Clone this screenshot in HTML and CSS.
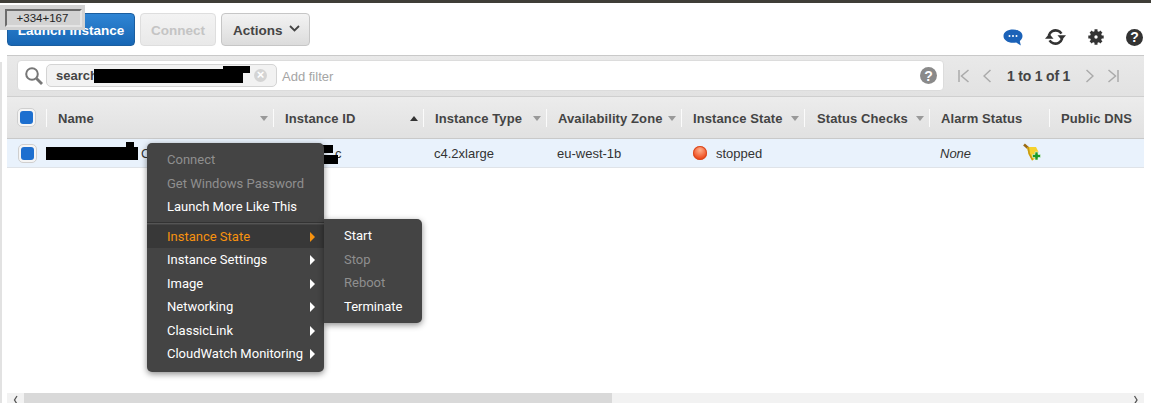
FILE: index.html
```html
<!DOCTYPE html>
<html lang="en">
<head>
<meta charset="utf-8">
<title>Instances</title>
<link rel="stylesheet" href="styles.css">
</head>
<body>
<div class="topline"></div>
<header class="toolbar">
  <div class="actions">
    <button class="btn primary">Launch Instance</button>
    <button class="btn disabled">Connect</button>
    <button class="btn">Actions
      <svg class="caret" width="11" height="7" viewBox="0 0 11 7"><path d="M1 1l4.500 4.500L10 1" fill="none" stroke="#444" stroke-width="1.800"/></svg>
    </button>
  </div>
  <div class="tools">
    <svg width="20" height="20" viewBox="0 0 20 20"><path d="M10 2.500c5.400 0 9.500 2.700 9.500 6.500 0 2-1.100 3.700-2.700 4.900l1 4.600-4.600-3c-1 .2-2.100.3-3.200.3-5.400 0-9.500-2.900-9.500-6.800s4.100-6.500 9.500-6.500z" fill="#1b62b8"/><circle cx="6.500" cy="9" r="1" fill="#fff"/><circle cx="10" cy="9" r="1" fill="#fff"/><circle cx="13.500" cy="9" r="1" fill="#fff"/></svg>
    <svg width="21" height="20" viewBox="0 0 21 20"><path d="M3.800 8.500C5 4.500 9 2.500 12.800 3.700c1.600.5 2.800 1.500 3.600 2.900" fill="none" stroke="#333" stroke-width="2.600"/><path d="M12.500 8.200h8.500l-4.300 5z" fill="#333"/><path d="M17.200 11.500c-1.200 4-5.200 6-9 4.800-1.600-.5-2.800-1.500-3.600-2.900" fill="none" stroke="#333" stroke-width="2.600"/><path d="M8.500 11.800H0l4.300-5z" fill="#333"/></svg>
    <svg width="16" height="20" viewBox="0 0 16 20"><circle cx="8" cy="10" r="4.300" fill="none" stroke="#333" stroke-width="3.400"/><path d="M8 2.300v15.400M.3 10h15.400M2.600 4.600l10.800 10.800M13.400 4.600L2.600 15.400" stroke="#333" stroke-width="3"/><circle cx="8" cy="10" r="1.700" fill="#fff"/></svg>
    <span class="help dark">?</span>
  </div>
</header>

<main class="panel">
  <div class="filterbar">
    <div class="searchbox">
      <svg width="20" height="20" viewBox="0 0 20 20"><circle cx="8" cy="8" r="5.800" fill="none" stroke="#777" stroke-width="2"/><path d="M12.500 12.500l5.500 5.500" stroke="#777" stroke-width="2.800"/></svg>
      <span class="token"><span class="token-text">search</span><span class="token-x">×</span></span>
      <span class="addfilter">Add filter</span>
      <span class="help grey">?</span>
    </div>
    <nav class="pager">
      <svg width="11" height="14" viewBox="0 0 11 14"><path d="M1 1v12M10.500 1L3.500 7l7 6" fill="none" stroke="#aaa" stroke-width="1.500"/></svg>
      <svg width="8" height="14" viewBox="0 0 8 14"><path d="M7.500 1L1 7l6.500 6" fill="none" stroke="#aaa" stroke-width="1.500"/></svg>
      <span class="pagetext">1 to 1 of 1</span>
      <svg width="8" height="14" viewBox="0 0 8 14"><path d="M.5 1L7 7 .5 13" fill="none" stroke="#aaa" stroke-width="1.500"/></svg>
      <svg width="11" height="14" viewBox="0 0 11 14"><path d="M10 1v12M.5 1l7 6-7 6" fill="none" stroke="#aaa" stroke-width="1.500"/></svg>
    </nav>
  </div>

  <div class="grid head">
    <div class="cell check"><span class="checkbox"></span></div>
    <div class="cell"><span class="label">Name</span><i class="sort"></i></div>
    <div class="cell"><span class="label">Instance ID</span><i class="sort up"></i></div>
    <div class="cell"><span class="label">Instance Type</span><i class="sort"></i></div>
    <div class="cell"><span class="label">Availability Zone</span><i class="sort"></i></div>
    <div class="cell"><span class="label">Instance State</span><i class="sort"></i></div>
    <div class="cell status"><span class="label">Status Checks</span><i class="sort"></i></div>
    <div class="cell"><span class="label">Alarm Status</span></div>
    <div class="cell"><span class="label">Public DNS</span></div>
  </div>
  <div class="grid row">
    <div class="cell check"><span class="checkbox"></span></div>
    <div class="cell name">C</div>
    <div class="cell id">c</div>
    <div class="cell">c4.2xlarge</div>
    <div class="cell">eu-west-1b</div>
    <div class="cell state"><span class="dot"></span>stopped</div>
    <div class="cell"></div>
    <div class="cell alarm"><em>None</em>
      <svg class="broom" width="18" height="18" viewBox="0 0 18 18"><path d="M1 1.500l4 3.500" stroke="#9a6a14" stroke-width="2.600"/><path d="M4 4h9l2.500 5-2 6-4.500 2.500L5.500 11z" fill="#f5d22e"/><path d="M4 4l1.500 7L9 17.500l1.500-.8L7 10.500 6 4z" fill="#c89a14"/><path d="M9.500 11.500h2.500V9h3v2.500h2.500v3H15V17h-3v-2.500H9.500z" fill="#1c9a25" stroke="#e8f6e8" stroke-width=".6"/></svg>
    </div>
    <div class="cell"></div>
  </div>

  <div class="spacer"></div>
  <div class="scrollbar">
    <svg class="arrow" width="17" height="10" viewBox="0 0 17 10"><path d="M10 3L7.500 7 10 11" fill="none" stroke="#555" stroke-width="1.300"/></svg>
    <div class="track"><div class="thumb"></div></div>
    <svg class="arrow" width="17" height="10" viewBox="0 0 17 10"><path d="M7.500 3L10 7l-2.500 4" fill="none" stroke="#555" stroke-width="1.300"/></svg>
  </div>
</main>

<div class="edge"></div>
<div class="coords"><span class="coords-inner">+334+167</span></div>
<span class="redact r1"></span>
<span class="redact r2"></span>
<span class="redact r3"></span>
<span class="redact r4"></span>
<span class="redact r5"></span>
<span class="redact r6"></span>

<ul class="menu main-menu">
  <li class="off">Connect</li>
  <li class="off">Get Windows Password</li>
  <li>Launch More Like This</li>
  <li class="divider"></li>
  <li class="sub active">Instance State</li>
  <li class="sub">Instance Settings</li>
  <li class="sub">Image</li>
  <li class="sub">Networking</li>
  <li class="sub">ClassicLink</li>
  <li class="sub">CloudWatch Monitoring</li>
</ul>
<ul class="menu sub-menu">
  <li>Start</li>
  <li class="off">Stop</li>
  <li class="off">Reboot</li>
  <li>Terminate</li>
</ul>
</body>
</html>
```

FILE: styles.css
```css
* { box-sizing: border-box; }
html, body { margin: 0; height: 403px; overflow: hidden; }
body { position: relative; background: #fff; font-family: "Liberation Sans", Arial, sans-serif; font-size: 13px; color: #333; }

.topline { height: 3px; background: #3f3e38; }

.toolbar { height: 52px; padding: 10px 8px 0 7px; display: flex; justify-content: space-between; }
.actions { display: flex; gap: 5px; height: 33px; }
.btn { width: 89px; height: 33px; padding: 1px 0 0 11px; border-radius: 4px; border: 1px solid #c6c6c6; background: linear-gradient(#f3f3f3, #dcdcdc); font: bold 13.500px "Liberation Sans", Arial, sans-serif; color: #444; display: flex; align-items: center; gap: 6px; }
.btn.primary { width: 128px; justify-content: center; padding: 1px 0 0; background: linear-gradient(#2f85d4, #1766b4); border-color: #1b5e9f; color: #fff; }
.btn.disabled { width: 76px; justify-content: center; padding: 1px 0 0; color: #c4c4c4; background: linear-gradient(#f3f3f3, #e9e9e9); border-color: #dedede; }
.caret { margin-top: -3px; }

.tools { display: flex; align-items: center; gap: 22px; margin-top: 14px; height: 20px; }
.help { display: inline-flex; align-items: center; justify-content: center; border-radius: 50%; color: #fff; font: bold 14px/1 "Liberation Sans", Arial, sans-serif; width: 17px; height: 17px; }
.help.dark { background: #333; }
.help.grey { background: #8a8a8a; margin-left: auto; margin-right: 6px; }

.panel { margin: 0 7px; height: 348px; display: flex; flex-direction: column; border-top: 1px solid #c9c9c9; }

.filterbar { height: 41px; padding: 4px 0 5px 10px; background: linear-gradient(#e9e9e9, #e2e2e2); display: flex; align-items: center; border-bottom: 1px solid #cfcfcf; }
.searchbox { width: 927px; height: 31px; background: #fff; border: 1px solid #dcdcdc; border-radius: 4px; display: flex; align-items: center; padding: 0 0 0 6px; }
.token { margin-left: 2px; width: 231px; height: 23px; border: 1px solid #d4d4d4; border-radius: 5px; background: #f2f2f2; padding-left: 9px; display: flex; align-items: center; justify-content: space-between; font: bold 13px "Liberation Sans", Arial, sans-serif; color: #444; }
.token-x { width: 13px; height: 13px; margin-right: 9px; border-radius: 50%; background: #d4d4d4; color: #fff; font-size: 13px; line-height: 12px; text-align: center; }
.addfilter { margin: 1px 0 0 5px; color: #a5a5a5; font-size: 13px; }

.pager { display: flex; align-items: center; margin-left: 14px; gap: 14px; }
.pagetext { margin: 0 2px; font-weight: bold; font-size: 14px; letter-spacing: -.2px; color: #444; }

.grid { display: grid; grid-template-columns: 40px 227px 150px 123px 135px 123px 125px 120px 1fr; }
.head { height: 42px; background: linear-gradient(#ececec, #e1e1e1); border-bottom: 1px solid #c9c9c9; align-items: center; font: bold 13px "Liberation Sans", Arial, sans-serif; color: #444; }
.head .cell { height: 18px; border-right: 1px solid #fbfbfb; padding-left: 11px; display: flex; align-items: center; position: relative; letter-spacing: .1px; white-space: nowrap; }
.head .cell:last-child { border-right: 0; }
.head .check { padding-left: 0; }
.head .status { padding-left: 12px; }
.label { margin-top: 2px; }
.row { height: 29px; background: #e9f2fc; border-bottom: 1px solid #dfe3e8; align-items: center; font-size: 13px; color: #333; }
.row .cell { padding-left: 10px; white-space: nowrap; }
.row .check { padding-left: 0; }
.check { display: flex; align-items: center; justify-content: center; }
.checkbox { width: 19px; height: 19px; padding: 2px; display: flex; border: 1px solid #cfcfcf; border-radius: 5px; background: #f5f5f5; }
.checkbox::before { content: ""; flex: 1; border-radius: 3px; background: #1d6fcf; }
.sort { position: absolute; right: 5px; top: 7px; border-left: 4px solid transparent; border-right: 4px solid transparent; border-top: 5px solid #999; }
.sort.up { border-top: 0; border-bottom: 5px solid #333; }
.row .name { padding-left: 94px; }
.row .id { padding-left: 61px; }
.row .state { padding-left: 11px; display: flex; align-items: center; }
.dot { width: 14px; height: 14px; margin-right: 9px; border-radius: 50%; background: radial-gradient(circle at 50% 30%, #ffb08c, #ee4a1c 70%); box-shadow: inset 0 0 0 1px #d9491f; }
.alarm { position: relative; }
.broom { position: absolute; left: 93px; top: -3px; }

.spacer { flex: 1; }
.scrollbar { height: 10px; display: flex; background: #f2f2f2; overflow: hidden; }
.arrow { flex: none; }
.track { flex: 1; }
.thumb { width: 588px; height: 10px; background: #d9d9d9; }

.edge { position: absolute; left: 0; top: 62px; bottom: 0; width: 2px; background: #e2e2e2; }
.coords { position: absolute; left: 0; top: 5px; width: 85px; height: 25px; padding: 4px 3px 3px 5px; background: #d2d2d2; }
.coords-inner { display: block; height: 18px; padding-right: 2px; background: #d2d2d2; border: 2px solid; border-color: #6c6c6c #e4e4e4 #e4e4e4 #6c6c6c; text-align: center; font: 11.500px/14px "Liberation Sans", Arial, sans-serif; color: #222; }

.redact { position: absolute; background: #000; }
.r1 { left: 94px; top: 69px; width: 149px; height: 14px; }
.r2 { left: 223px; top: 66px; width: 27px; height: 7px; }
.r3 { left: 46px; top: 147px; width: 92px; height: 13px; }
.r4 { left: 126px; top: 142px; width: 8px; height: 18px; }
.r5 { left: 317px; top: 145px; width: 16px; height: 8px; }
.r6 { left: 312px; top: 155px; width: 26px; height: 9px; }

.menu { position: absolute; margin: 0; padding: 5px 0; list-style: none; background: #444; color: #fff; font: 13px/23.500px Roboto, sans-serif; border-radius: 5px; box-shadow: 0 2px 6px rgba(0,0,0,.45); }
.main-menu { left: 147px; top: 143px; width: 177px; height: 229px; }
.sub-menu { left: 324px; top: 219px; width: 98px; height: 104px; padding-top: 5px; border-radius: 0 5px 5px 0; }
.menu li { padding-left: 20px; white-space: nowrap; position: relative; }
.menu .off { color: #8f8f8f; }
.menu .divider { height: 2px; margin: 3px 0 1px; padding: 0; background: #333; border-bottom: 1px solid #555; }
.menu .active { color: #f7920f; background: #383838; }
.menu .sub::after { content: ""; position: absolute; right: 9px; top: 7px; border-left: 5px solid #fff; border-top: 5px solid transparent; border-bottom: 5px solid transparent; }
.menu .active::after { border-left-color: #f7920f; }
```
